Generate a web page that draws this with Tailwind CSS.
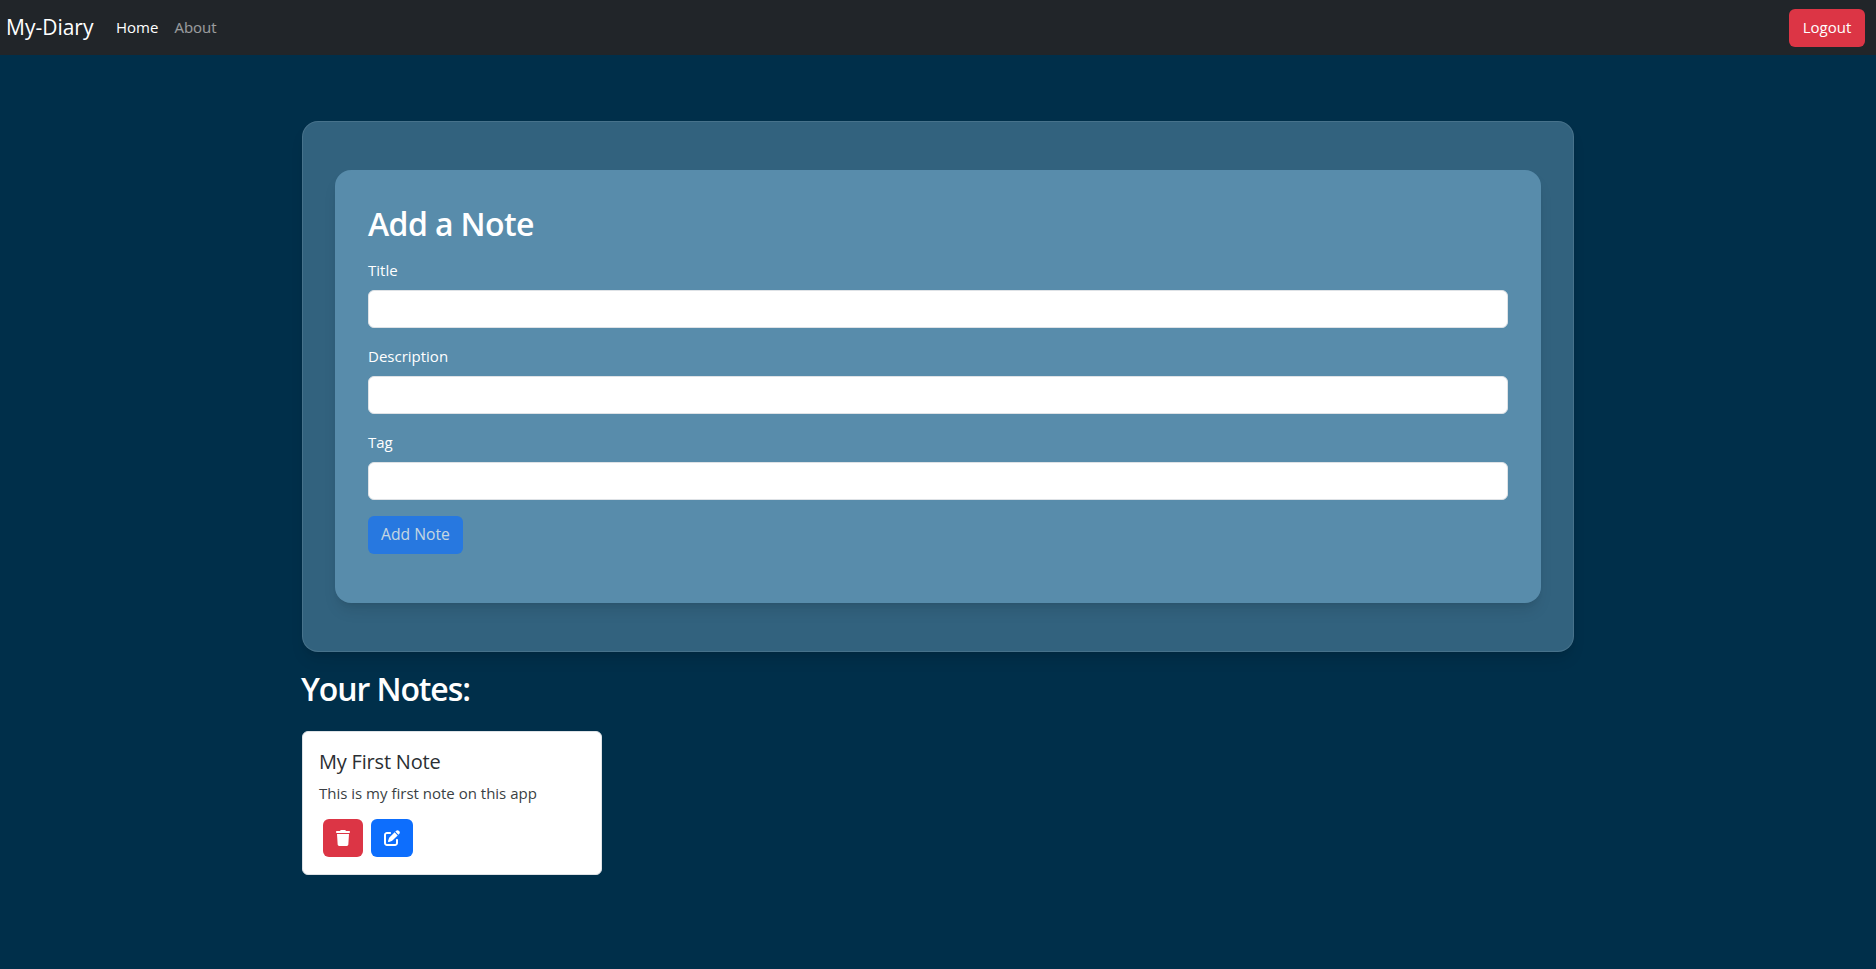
<!DOCTYPE html>
<html lang="en">
<head>
    <meta charset="UTF-8">
    <title>My-Diary</title>
    <script src="https://cdn.jsdelivr.net/npm/@tailwindcss/browser@4"></script>
</head>
<body class="min-h-screen bg-[#002f4a] font-['Open_Sans','Liberation_Sans',sans-serif] text-[15px] text-[#212529]">
    <nav class="flex h-[55px] items-center justify-between bg-[#212529] pl-1.5 pr-[11px]">
        <div class="flex items-center">
            <a class="w-[89px] text-[21px] text-white" href="#">My-Diary</a>
            <ul class="ml-[21px] flex gap-4">
                <li><a class="text-white" href="#">Home</a></li>
                <li><a class="text-white/55" href="#">About</a></li>
            </ul>
        </div>
        <button class="h-[38px] w-[76px] rounded-md bg-[#dc3545] text-white">Logout</button>
    </nav>

    <main class="mx-auto mt-[66px] w-[1272px]">
        <section class="rounded-2xl border border-white/10 bg-[#32627e] px-8 py-12 shadow-lg">
            <div class="h-[433px] rounded-2xl bg-[#588cab] px-[33px] pt-[35px] shadow-lg">
                <h2 class="mb-[15px] text-[32px] leading-[38px] font-semibold tracking-[-0.6px] text-white">Add a Note</h2>
                <form>
                    <div class="mb-4">
                        <label class="mb-2 block leading-6 text-white">Title</label>
                        <input type="text" class="block h-[38px] w-full rounded-md border border-[#dee2e6] bg-white">
                    </div>
                    <div class="mb-4">
                        <label class="mb-2 block leading-6 text-white">Description</label>
                        <input type="text" class="block h-[38px] w-full rounded-md border border-[#dee2e6] bg-white">
                    </div>
                    <div class="mb-4">
                        <label class="mb-2 block leading-6 text-white">Tag</label>
                        <input type="text" class="block h-[38px] w-full rounded-md border border-[#dee2e6] bg-white">
                    </div>
                    <button type="button" disabled class="h-[38px] w-[95px] rounded-md bg-[#0d6efd] text-[15.7px] text-white opacity-65">Add Note</button>
                </form>
            </div>
        </section>

        <h2 class="mt-[18px] -ml-px text-[32px] leading-[38px] font-semibold tracking-[-1.1px] text-white">Your Notes:</h2>

        <div class="mt-[23px] h-[144px] w-[300px] rounded-md border border-[#dee2e6] bg-white px-4 pt-[18px]">
            <h5 class="text-[20px] leading-6 tracking-[-0.2px] text-[#2b2f33]">My First Note</h5>
            <p class="mt-[7px] leading-6 text-[#3a3f44]">This is my first note on this app</p>
            <div class="mt-[14px] ml-1 flex gap-2">
                <button class="flex h-[38px] w-10 items-center justify-center rounded-md bg-[#dc3545]" aria-label="Delete">
                    <svg class="h-4 w-3.5 fill-white" viewBox="0 0 448 512"><path d="M135.2 17.7L128 32H32C14.3 32 0 46.3 0 64S14.3 96 32 96H416c17.7 0 32-14.3 32-32s-14.3-32-32-32H320l-7.2-14.3C307.4 6.8 296.3 0 284.2 0H163.8c-12.1 0-23.2 6.8-28.6 17.7zM416 128H32L53.2 467c1.6 25.3 22.6 45 47.9 45H346.9c25.3 0 46.3-19.7 47.9-45L416 128z"/></svg>
                </button>
                <button class="flex h-[38px] w-[42px] items-center justify-center rounded-md bg-[#0d6efd]" aria-label="Edit">
                    <svg class="h-4 w-4 fill-white" viewBox="0 0 512 512"><path d="M471.6 21.7c-21.9-21.9-57.3-21.9-79.2 0L362.3 51.7l97.9 97.9 30.1-30.1c21.9-21.9 21.9-57.3 0-79.2L471.6 21.7zm-299.2 220c-6.1 6.1-10.8 13.6-13.5 21.9l-29.6 88.8c-2.9 8.6-.6 18.1 5.8 24.6s15.9 8.7 24.6 5.8l88.8-29.6c8.2-2.7 15.7-7.4 21.9-13.5L437.7 172.3 339.7 74.3 172.4 241.7zM96 64C43 64 0 107 0 160V416c0 53 43 96 96 96H352c53 0 96-43 96-96V320c0-17.7-14.3-32-32-32s-32 14.3-32 32v96c0 17.7-14.3 32-32 32H96c-17.7 0-32-14.3-32-32V160c0-17.7 14.3-32 32-32h96c17.7 0 32-14.3 32-32s-14.3-32-32-32H96z"/></svg>
                </button>
            </div>
        </div>
    </main>
</body>
</html>
